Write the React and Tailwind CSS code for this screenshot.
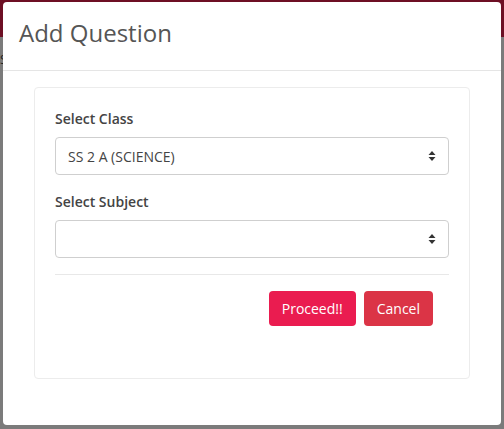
import React from "react";

function Arrows() {
  return (
    <svg width="8" height="12" viewBox="0 0 8 12" className="shrink-0">
      <path d="M4 1 L7.5 5 H0.5 Z" fill="#333" />
      <path d="M4 11 L7.5 7 H0.5 Z" fill="#333" />
    </svg>
  );
}

function Select({ value }) {
  return (
    <div className="flex h-[38px] items-center justify-between rounded-[4px] border border-[#cfcfcf] bg-white pl-[12px] pr-[12px] text-[14px] text-[#444]">
      <span>{value}</span>
      <Arrows />
    </div>
  );
}

export default function App() {
  return (
    <div
      className="relative h-[429px] w-[504px] overflow-hidden bg-[#7b7b7b]"
      style={{ fontFamily: '"Open Sans", "Noto Sans", sans-serif' }}
    >
      <div className="absolute left-0 right-0 top-0 h-[37px] bg-[#6d0f24]" />
      <div className="absolute left-0 top-[50px] text-[13px] text-[#222]">S</div>
      <div className="absolute left-[3px] top-[2px] flex h-[423px] w-[498px] flex-col rounded-[4px] bg-white">
        <div className="h-[69px] shrink-0 border-b border-[#e5e5e5] pl-[16px] pt-[19px]">
          <h1 className="text-[24px] font-normal text-[#555] leading-none">Add Question</h1>
        </div>
        <div className="px-[31px] pt-[16px]">
          <div className="h-[292px] rounded-[4px] border border-[#ececec] px-[20px] pt-[20px]">
            <div className="text-[14px] font-semibold text-[#444]">Select Class</div>
            <div className="mt-[8px]">
              <Select value="SS 2 A (SCIENCE)" />
            </div>
            <div className="mt-[16px] text-[14px] font-semibold text-[#444]">Select Subject</div>
            <div className="mt-[8px]">
              <Select value="" />
            </div>
            <div className="mt-[16px] border-t border-[#e8e8e8]" />
            <div className="mt-[16px] flex justify-end gap-[8px] pr-[16px]">
              <button className="h-[35px] rounded-[4px] bg-[#ea1c50] px-[13px] text-[14px] text-white">Proceed!!</button>
              <button className="h-[35px] rounded-[4px] bg-[#db3446] px-[13px] text-[14px] text-white">Cancel</button>
            </div>
          </div>
        </div>
      </div>
    </div>
  );
}
